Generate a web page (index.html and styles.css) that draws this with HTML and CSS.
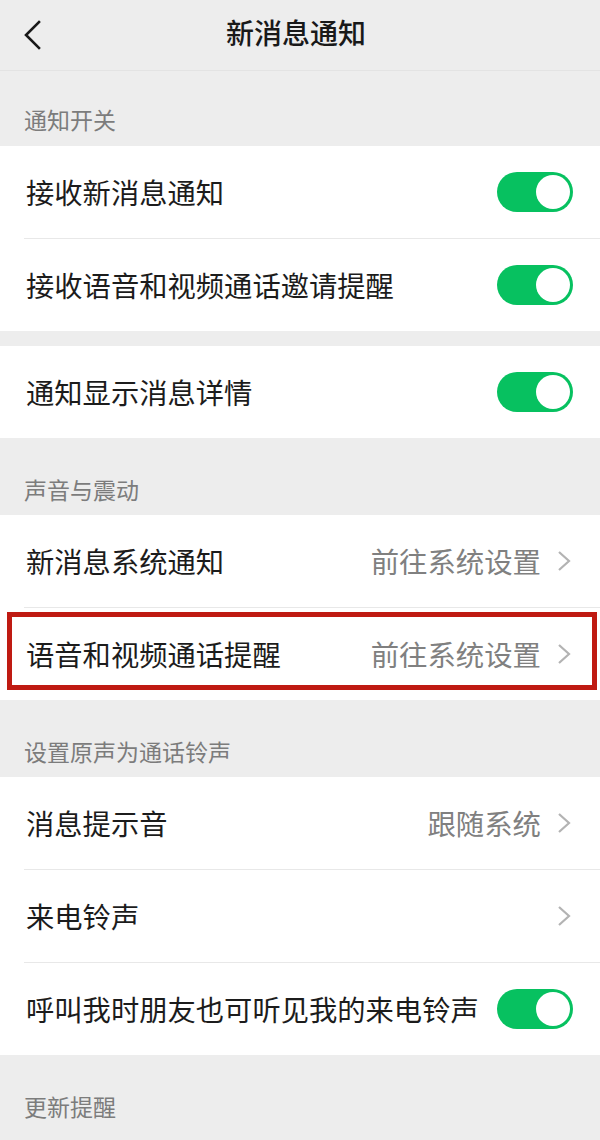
FILE: index.html
```html
<!DOCTYPE html>
<html lang="zh-CN">
<head>
<meta charset="utf-8">
<title>新消息通知</title>
<link rel="stylesheet" href="styles.css">
</head>
<body>
<div class="page">
  <header class="nav">
    <div class="nav-back">
      <svg width="20" height="32" viewBox="0 0 20 32"><polyline points="16,2 3,15 16,28" fill="none" stroke="#181818" stroke-width="2.6" stroke-linecap="square"/></svg>
    </div>
    <div class="nav-title">新消息通知</div>
    <div class="nav-side"></div>
  </header>

  <div class="sec sec-first">通知开关</div>
  <div class="group">
    <div class="row"><div class="row-inner"><span class="label">接收新消息通知</span><span class="switch"><span class="knob"></span></span></div></div>
    <div class="row"><div class="row-inner"><span class="label">接收语音和视频通话邀请提醒</span><span class="switch"><span class="knob"></span></span></div></div>
  </div>
  <div class="gap"></div>
  <div class="group">
    <div class="row"><div class="row-inner"><span class="label">通知显示消息详情</span><span class="switch"><span class="knob"></span></span></div></div>
  </div>

  <div class="sec">声音与震动</div>
  <div class="group">
    <div class="row"><div class="row-inner"><span class="label">新消息系统通知</span><span class="value">前往系统设置</span><svg class="chev" width="14" height="22" viewBox="0 0 14 22"><polyline points="2,2 12,11 2,20" fill="none" stroke="#b3b3b3" stroke-width="2.2"/></svg></div></div>
    <div class="row row-marked"><div class="row-inner"><span class="label">语音和视频通话提醒</span><span class="value">前往系统设置</span><svg class="chev" width="14" height="22" viewBox="0 0 14 22"><polyline points="2,2 12,11 2,20" fill="none" stroke="#b3b3b3" stroke-width="2.2"/></svg></div><div class="mark"></div></div>
  </div>

  <div class="sec">设置原声为通话铃声</div>
  <div class="group">
    <div class="row"><div class="row-inner"><span class="label">消息提示音</span><span class="value">跟随系统</span><svg class="chev" width="14" height="22" viewBox="0 0 14 22"><polyline points="2,2 12,11 2,20" fill="none" stroke="#b3b3b3" stroke-width="2.2"/></svg></div></div>
    <div class="row"><div class="row-inner"><span class="label">来电铃声</span><span class="value"></span><svg class="chev" width="14" height="22" viewBox="0 0 14 22"><polyline points="2,2 12,11 2,20" fill="none" stroke="#b3b3b3" stroke-width="2.2"/></svg></div></div>
    <div class="row"><div class="row-inner"><span class="label">呼叫我时朋友也可听见我的来电铃声</span><span class="switch"><span class="knob"></span></span></div></div>
  </div>

  <div class="sec">更新提醒</div>
</div>
</body>
</html>
```
FILE: styles.css
```css
html, body {
  margin: 0;
  padding: 0;
  background: #ededed;
}
body {
  font-family: "Noto Sans CJK SC", "Noto Sans", sans-serif;
  color: #1c1c1c;
}
.page {
  width: 600px;
  height: 1140px;
  overflow: hidden;
  background: #ededed;
}
.nav {
  height: 70px;
  display: grid;
  grid-template-columns: 70px 1fr 70px;
  align-items: center;
  border-bottom: 1px solid #e3e3e3;
}
.nav-back {
  display: flex;
  align-items: center;
  padding-left: 23px;
  height: 70px;
  padding-top: 2px;
  box-sizing: border-box;
}
.nav-back svg { display: block; }
.nav-title {
  text-align: center;
  font-size: 28px;
  font-weight: 500;
  line-height: 40px;
  color: #191919;
  padding-right: 8px;
  padding-bottom: 6px;
}
.sec {
  padding: 36px 24px 11px;
  font-size: 23px;
  line-height: 30px;
  color: #7c7c7c;
}
.sec-first {
  padding-top: 33px;
  padding-bottom: 12px;
}
.group {
  background: #fff;
}
.gap {
  height: 15px;
}
.row {
  position: relative;
  padding-left: 24px;
}
.row-inner {
  height: 92px;
  display: flex;
  align-items: center;
  padding-right: 27px;
  padding-left: 2px;
  border-bottom: 1px solid #e8e8e8;
}
.row:last-child .row-inner {
  border-bottom: none;
}
.label {
  flex: 1;
  font-size: 28.3px;
  line-height: 40px;
  white-space: nowrap;
}
.value {
  font-size: 28.4px;
  line-height: 40px;
  color: #808080;
  margin-right: 16px;
}
.chev {
  display: block;
  margin-right: 2px;
}
.switch {
  width: 76px;
  height: 40px;
  border-radius: 20px;
  background: #07c160;
  position: relative;
  flex-shrink: 0;
}
.knob {
  position: absolute;
  right: 3px;
  top: 3px;
  width: 34px;
  height: 34px;
  border-radius: 50%;
  background: #fff;
}
.mark {
  position: absolute;
  left: 7px;
  right: 3px;
  top: 4px;
  bottom: 10px;
  border: 5px solid #bf1a12;
  box-sizing: border-box;
  pointer-events: none;
}
```
